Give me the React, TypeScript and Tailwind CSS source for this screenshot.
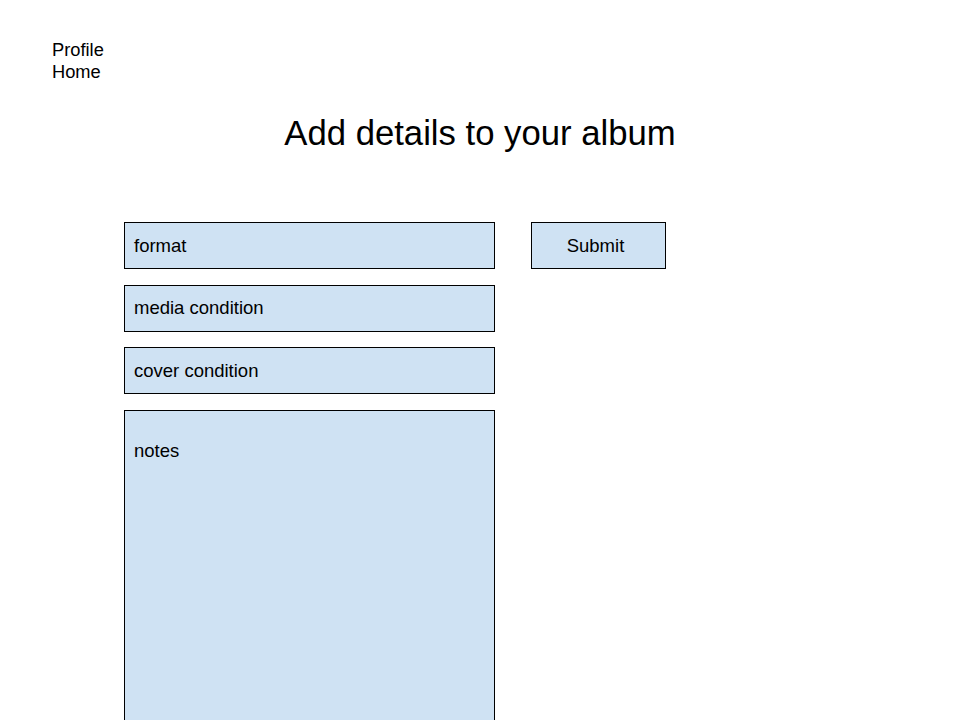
import React from "react";

const fields = ["format", "media condition", "cover condition"];

export default function App() {
  return (
    <div className="min-h-screen bg-white text-black font-['Liberation_Sans',Arial,sans-serif]">
      <nav className="flex flex-col pl-[52px] pt-[39px] text-[18.3px] leading-[22px]">
        <span>Profile</span>
        <span>Home</span>
      </nav>

      <h1 className="mt-[30px] text-center text-[34.7px] leading-[40px]">
        Add details to your album
      </h1>

      <div className="mt-[69px] flex items-start pl-[124px]">
        <div className="flex w-[371px] flex-col gap-[15.5px]">
          {fields.map((f) => (
            <div
              key={f}
              className="flex h-[47px] items-center border border-black bg-[#cfe2f3] pl-[9px] text-[18.5px]"
            >
              {f}
            </div>
          ))}
          <div className="h-[330px] border border-black bg-[#cfe2f3] pl-[9px] pt-[29px] text-[18.5px] leading-[22px]">
            notes
          </div>
        </div>
        <button
          type="button"
          className="ml-[36px] flex h-[47px] w-[135px] items-center justify-center border border-black bg-[#cfe2f3] pr-[6px] text-[18.5px]"
        >
          Submit
        </button>
      </div>
    </div>
  );
}
